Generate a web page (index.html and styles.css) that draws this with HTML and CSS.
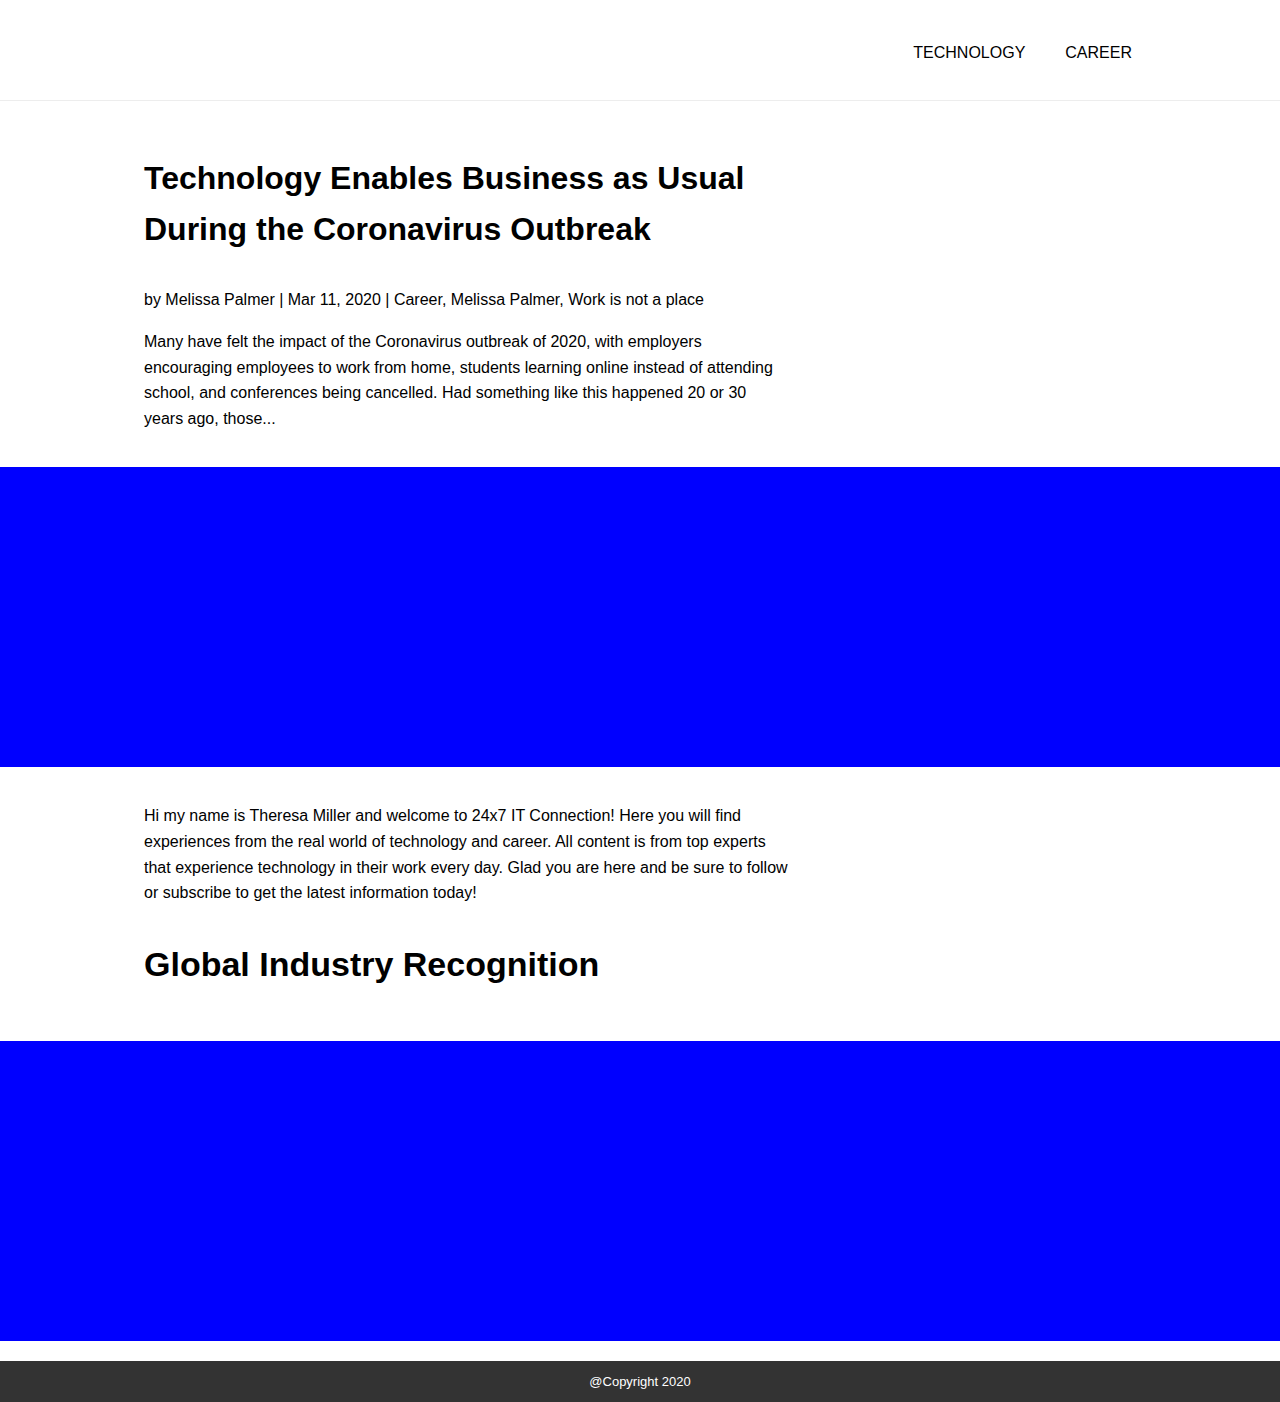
FILE: index.html
```html
<!DOCTYPE html>
<html lang="en">
<head>
<meta charset="utf-8">
<title>24x7 IT Connection</title>
<link rel="stylesheet" href="styles.css">
</head>
<body>
<header class="site-header">
  <div class="container header-inner">
    <nav class="main-nav">
      <a href="#" class="nav-link">TECHNOLOGY</a>
      <a href="#" class="nav-link">CAREER</a>
    </nav>
  </div>
</header>

<section class="post-section">
  <div class="container">
    <div class="column">
      <h1 class="post-title">Technology Enables Business as Usual During the Coronavirus Outbreak</h1>
      <p class="post-meta">by Melissa Palmer | Mar 11, 2020 | Career, Melissa Palmer, Work is not a place</p>
      <p class="post-excerpt">Many have felt the impact of the Coronavirus outbreak of 2020, with employers encouraging employees to work from home, students learning online instead of attending school, and conferences being cancelled. Had something like this happened 20 or 30 years ago, those...</p>
    </div>
  </div>
</section>

<div class="banner"></div>

<section class="intro-section">
  <div class="container">
    <div class="column">
      <p class="intro-text">Hi my name is Theresa Miller and welcome to 24x7 IT Connection! Here you will find experiences from the real world of technology and career. All content is from top experts that experience technology in their work every day. Glad you are here and be sure to follow or subscribe to get the latest information today!</p>
      <h2 class="section-title">Global Industry Recognition</h2>
    </div>
  </div>
</section>

<div class="banner"></div>

<footer class="site-footer">@Copyright 2020</footer>
</body>
</html>
```

FILE: styles.css
```css
* {
  box-sizing: border-box;
}

body {
  margin: 0;
  font-family: "Liberation Sans", Arial, sans-serif;
  color: #000;
  background: #fff;
}

.container {
  width: 1024px;
  margin: 0 auto;
}

.site-header {
  height: 101px;
  border-bottom: 1px solid #ededed;
}

.header-inner {
  height: 100px;
  display: flex;
  justify-content: flex-end;
  align-items: center;
}

.main-nav {
  display: flex;
  margin-top: 6px;
}

.nav-link {
  padding: 0 20px;
  font-size: 16px;
  color: #000;
  text-decoration: none;
}

.column {
  max-width: 677px;
  padding: 0 16px;
}

.post-section {
  padding: 52px 0 36px;
}

.post-title {
  margin: 0;
  font-size: 32px;
  font-weight: bold;
  line-height: 1.6;
}

.post-meta {
  margin: 32px 0 0;
  font-size: 16px;
  line-height: 1.6;
}

.post-excerpt {
  margin: 16px 0 0;
  font-size: 16px;
  line-height: 1.6;
}

.banner {
  height: 300px;
  background: #0000ff;
}

.intro-section {
  padding: 36px 0 50px;
}

.intro-text {
  margin: 0;
  font-size: 16px;
  line-height: 1.6;
}

.section-title {
  margin: 31px 0 0;
  font-size: 34px;
  font-weight: bold;
  line-height: 1.6;
}

.site-footer {
  margin-top: 20px;
  height: 41px;
  background: #333;
  color: #fff;
  font-size: 13px;
  display: flex;
  align-items: center;
  justify-content: center;
}
```
